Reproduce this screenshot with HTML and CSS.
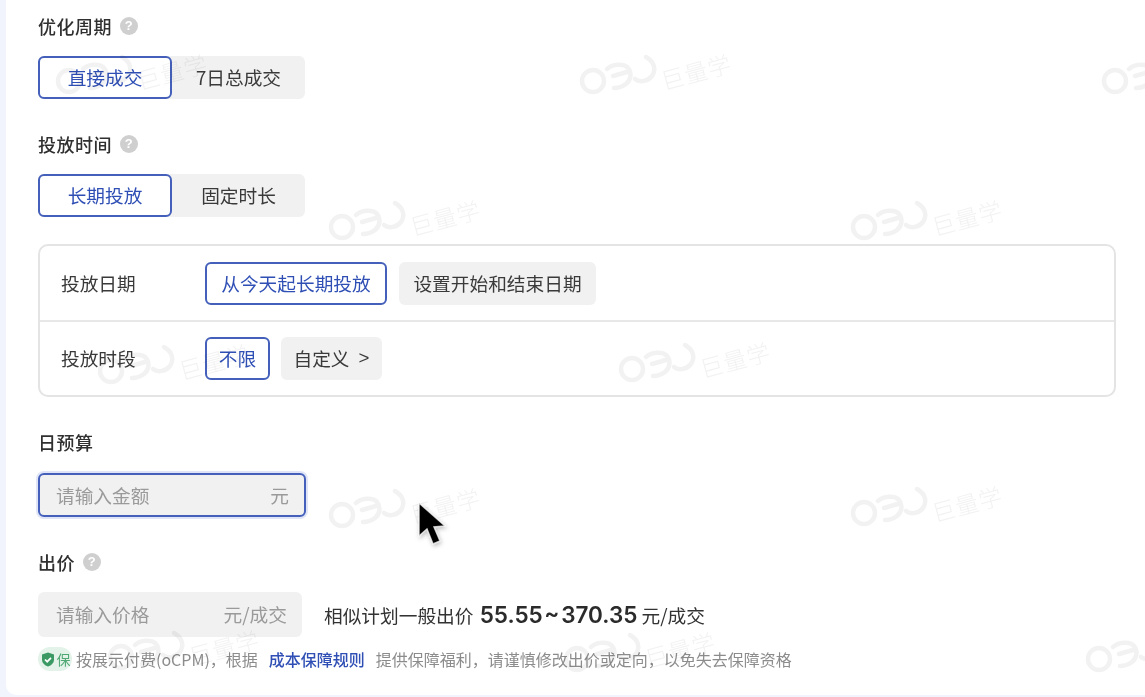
FILE: index.html
```html
<!DOCTYPE html>
<html lang="zh-CN">
<head>
<meta charset="utf-8">
<title>投放设置</title>
<link rel="stylesheet" href="styles.css">
</head>
<body>
<svg class="defs" width="0" height="0" aria-hidden="true">
  <symbol id="wm-logo" viewBox="0 0 80 46">
    <g fill="none" stroke="currentColor" stroke-width="4.500" stroke-linecap="round">
      <circle cx="15" cy="29" r="11"/>
      <path d="M29 17C34 12 46 11 50 16 54 21 53 28 48 32 44 35 40 36 36 36M35 24L49 20"/>
      <path d="M57 27C62 31 70 29 74 24 78 18 77 10 68 5"/>
    </g>
  </symbol>
</svg>
<div class="page">
  <main class="main">
    <section class="group group-first">
      <div class="label">优化周期 <i class="help">?</i></div>
      <div class="seg">
        <div class="seg-item on">直接成交</div>
        <div class="seg-item">7日总成交</div>
      </div>
    </section>
    <section class="group group-time">
      <div class="label">投放时间 <i class="help">?</i></div>
      <div class="seg">
        <div class="seg-item on">长期投放</div>
        <div class="seg-item">固定时长</div>
      </div>
    </section>
    <div class="box">
      <div class="row">
        <div class="row-name">投放日期</div>
        <div class="chip on chip-long">从今天起长期投放</div>
        <div class="chip chip-range">设置开始和结束日期</div>
      </div>
      <div class="row">
        <div class="row-name">投放时段</div>
        <div class="chip on chip-any">不限</div>
        <div class="chip chip-custom">自定义<span class="gt">&gt;</span></div>
      </div>
    </div>
    <section class="group group-budget">
      <div class="label">日预算</div>
      <div class="field field-focus"><span>请输入金额</span><span>元</span></div>
    </section>
    <section class="group group-bid">
      <div class="label">出价 <i class="help">?</i></div>
      <div class="bid-line">
        <div class="field field-bid"><span>请输入价格</span><span>元/成交</span></div>
        <div class="hint">相似计划一般出价 <b>55.55 ~ 370.35</b> 元/成交</div>
      </div>
      <div class="note">
        <span class="badge">
          <svg width="16" height="17" viewBox="0 0 16 16"><path d="M8 1l6 2v5c0 3.500-2.600 5.800-6 7-3.400-1.200-6-3.500-6-7V3z" fill="#3b9a63"/><path d="M5 8l2.200 2.200L11 6.400" fill="none" stroke="#fff" stroke-width="1.700"/></svg>保
        </span>
        <span>按展示付费(oCPM)，根据</span>
        <a class="link">成本保障规则</a>
        <span>提供保障福利，请谨慎修改出价或定向，以免失去保障资格</span>
      </div>
    </section>
  </main>
</div>
<div class="marks" aria-hidden="true">
  <div class="wm w1"><svg><use href="#wm-logo"/></svg><span>巨量学</span></div>
  <div class="wm w2"><svg><use href="#wm-logo"/></svg><span>巨量学</span></div>
  <div class="wm w3"><svg><use href="#wm-logo"/></svg></div>
  <div class="wm w4"><svg><use href="#wm-logo"/></svg><span>巨量学</span></div>
  <div class="wm w5"><svg><use href="#wm-logo"/></svg><span>巨量学</span></div>
  <div class="wm w6"><svg><use href="#wm-logo"/></svg><span>巨量学</span></div>
  <div class="wm w7"><svg><use href="#wm-logo"/></svg><span>巨量学</span></div>
  <div class="wm w8"><svg><use href="#wm-logo"/></svg><span>巨量学</span></div>
  <div class="wm w9"><svg><use href="#wm-logo"/></svg><span>巨量学</span></div>
  <div class="wm w10"><svg><use href="#wm-logo"/></svg><span>巨量学</span></div>
  <div class="wm w11"><svg><use href="#wm-logo"/></svg><span>巨量学</span></div>
  <div class="wm w12"><svg><use href="#wm-logo"/></svg></div>
</div>
<svg class="cursor" width="30" height="48" viewBox="0 0 30 48" aria-hidden="true">
  <path d="M2 1l0 33 8-7 6 15 7-3-6-14 11-1z" fill="#000" stroke="#fff" stroke-width="1.500" stroke-opacity=".75"/>
</svg>
</body>
</html>
```

FILE: styles.css
```css
* { box-sizing: border-box; }
html, body { margin: 0; height: 100%; overflow: hidden; }
body {
  background: #f1f4fd;
  font-family: "Noto Sans CJK SC", "Liberation Sans", sans-serif;
  color: #333;
  position: relative;
}
.defs { position: absolute; }
.page { padding-left: 6px; height: 695px; }
.main {
  background: #fff;
  height: 100%;
  border-bottom-left-radius: 10px;
  padding: 0 29px 0 32px;
}
.group-first { padding-top: 13px; }
.group-time { padding-top: 32px; }
.group-budget { padding-top: 32px; }
.group-bid { padding-top: 32px; }
.label {
  display: flex;
  align-items: center;
  gap: 8px;
  height: 26px;
  font-size: 18px;
  font-weight: 500;
  letter-spacing: .5px;
  color: #303030;
}
.help {
  width: 18px;
  height: 18px;
  border-radius: 50%;
  background: #cfcfcf;
  color: #fff;
  font: normal 700 13px/18px "Liberation Sans", sans-serif;
  text-align: center;
}
.seg {
  display: flex;
  width: 267px;
  height: 43px;
  margin-top: 17px;
  background: #f1f1f1;
  border-radius: 6px;
}
.seg-item {
  flex: 1;
  display: flex;
  align-items: center;
  justify-content: center;
  padding-bottom: 2px;
  font-size: 18.700px;
  color: #3a3a3a;
}
.seg-item.on {
  flex: 0 0 134px;
}
.on {
  background: #fff;
  border: 2px solid #4460ba;
  border-radius: 6px;
  color: #2f4fb5;
}
.box {
  margin-top: 27px;
  height: 153px;
  border: 2px solid #e4e4e4;
  border-radius: 10px;
}
.row {
  display: flex;
  align-items: center;
  gap: 12px;
  height: 74px;
  padding-left: 21px;
}
.row + .row { border-top: 2px solid #e8e8e8; height: 75px; }
.row-name {
  width: 132px;
  padding-bottom: 2px;
  font-size: 18.700px;
  color: #3a3a3a;
}
.chip {
  display: flex;
  align-items: center;
  justify-content: center;
  height: 43px;
  padding-bottom: 2px;
  border-radius: 6px;
  background: #f1f1f1;
  font-size: 18.700px;
  color: #3a3a3a;
}
.chip.on { background: #fff; color: #2f4fb5; }
.chip-long { width: 182px; }
.chip-range { width: 197px; }
.chip-any { width: 65px; margin-right: -1px; }
.chip-custom { width: 101px; }
.gt { margin-left: 9px; font-family: "Liberation Sans", sans-serif; }
.field {
  display: flex;
  align-items: center;
  justify-content: space-between;
  margin-top: 18px;
  padding: 0 15px 2px 16px;
  background: #f1f1f1;
  border-radius: 6px;
  font-size: 18.700px;
  color: #9a9a9a;
}
.field-focus {
  width: 268px;
  height: 44px;
  border: 2px solid #4460ba;
  box-shadow: 0 0 0 2px #dfe5f7;
}
.field-bid { width: 264px; height: 45px; margin-top: 0; padding-left: 18px; }
.bid-line {
  display: flex;
  align-items: center;
  gap: 22px;
  margin-top: 17px;
}
.hint { font-size: 18.700px; color: #333; white-space: nowrap; }
.hint b {
  margin-left: 2px;
  font-family: Inter, "Liberation Sans", sans-serif;
  font-size: 22.500px;
  font-weight: 600;
  word-spacing: -4px;
  color: #2b2b2b;
}
.note {
  display: flex;
  align-items: center;
  margin-top: 10px;
  height: 24px;
  font-size: 16px;
  color: #8c8c8c;
  white-space: nowrap;
}
.badge {
  display: inline-flex;
  align-items: center;
  justify-content: center;
  gap: 1px;
  width: 34px;
  height: 24px;
  margin-right: 4px;
  border-radius: 12px;
  background: #e3f3e9;
  color: #4fa873;
  font-size: 14px;
}
.link { margin: 0 11px; color: #2f4fb5; font-weight: 500; }
.marks { position: absolute; inset: 0; pointer-events: none; mix-blend-mode: multiply; }
.wm {
  position: absolute;
  display: flex;
  align-items: flex-start;
  gap: 2px;
  width: 175px;
  color: #f2f2f2;
}
.wm svg { width: 80px; height: 46px; flex: none; }
.wm span {
  display: block;
  margin-top: 2px;
  font-size: 23px;
  font-weight: 300;
  letter-spacing: 1px;
  white-space: nowrap;
  transform: rotate(-15deg);
}
.w1 { left: 54px; top: 52px; }
.w2 { left: 578px; top: 52px; }
.w3 { left: 1100px; top: 52px; }
.w4 { left: 327px; top: 198px; }
.w5 { left: 849px; top: 198px; }
.w6 { left: 96px; top: 342px; }
.w7 { left: 617px; top: 340px; }
.w8 { left: 327px; top: 486px; }
.w9 { left: 849px; top: 484px; }
.w10 { left: 106px; top: 628px; }
.w11 { left: 562px; top: 630px; }
.w12 { left: 1084px; top: 630px; }
.cursor { position: absolute; left: 417px; top: 502px; filter: drop-shadow(1px 2px 2px rgba(0,0,0,.25)); }
```
